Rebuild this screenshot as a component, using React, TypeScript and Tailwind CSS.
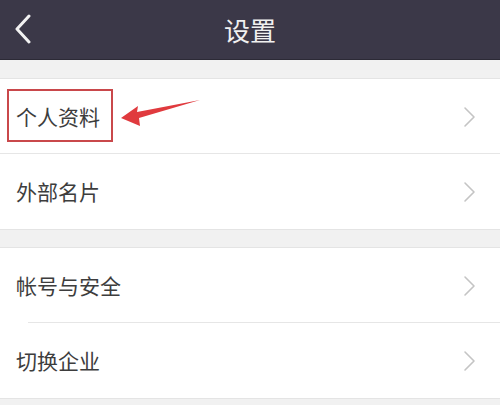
import React from "react";

const Chevron = () => (
  <svg width="14" height="22" viewBox="0 0 14 22" className="shrink-0">
    <path d="M2 2 L11 11 L2 20" fill="none" stroke="#c4c4c4" strokeWidth="1.6" strokeLinecap="round" strokeLinejoin="round" />
  </svg>
);

const Row = ({ label, divider, inset }: { label: string; divider?: boolean; inset?: boolean }) => (
  <div className="relative flex h-[75px] items-center justify-between bg-white pl-4 pr-[23px]">
    <span className="text-[21px] text-[#3d3d3d]">{label}</span>
    <Chevron />
    {divider && (
      <div className={`absolute bottom-0 right-0 h-px bg-[#e6e6e6] ${inset ? "left-[28px]" : "left-0"}`} />
    )}
  </div>
);

export default function App() {
  return (
    <div
      className="h-[405px] w-[500px] overflow-hidden bg-[#f1f1f1]"
      style={{ fontFamily: '"Noto Sans CJK SC", "Noto Sans", sans-serif' }}
    >
      <div className="relative flex h-[60px] items-center justify-center bg-[#3b3848] border-b border-[#2c2a36]">
        <svg width="18" height="30" viewBox="0 0 18 30" className="absolute left-[14px] top-[14px]">
          <path d="M15 2 L3 15 L15 28" fill="none" stroke="#f2f2f2" strokeWidth="3" strokeLinecap="round" strokeLinejoin="round" />
        </svg>
        <span className="text-[26px] text-[#f0f0f0]">设置</span>
      </div>
      <div className="h-[18px]" />
      <div className="relative border-t border-[#e4e4e4]">
        <Row label="个人资料" divider />
        <Row label="外部名片" />
        <div className="pointer-events-none absolute left-[7px] top-[10px] h-[53px] w-[106px] border-2 border-[#c9484b]" />
        <svg width="90" height="30" viewBox="0 0 90 30" className="pointer-events-none absolute left-[118px] top-[20px]">
          <path d="M3 19 L20 7 L19 13 L82 1 L21 19 L22 27 Z" fill="#e03a3e" />
        </svg>
      </div>
      <div className="h-[18px] border-t border-[#e4e4e4]" />
      <div className="border-t border-[#e4e4e4]">
        <Row label="帐号与安全" divider inset />
        <Row label="切换企业" />
      </div>
      <div className="border-t border-[#e4e4e4]" />
    </div>
  );
}
